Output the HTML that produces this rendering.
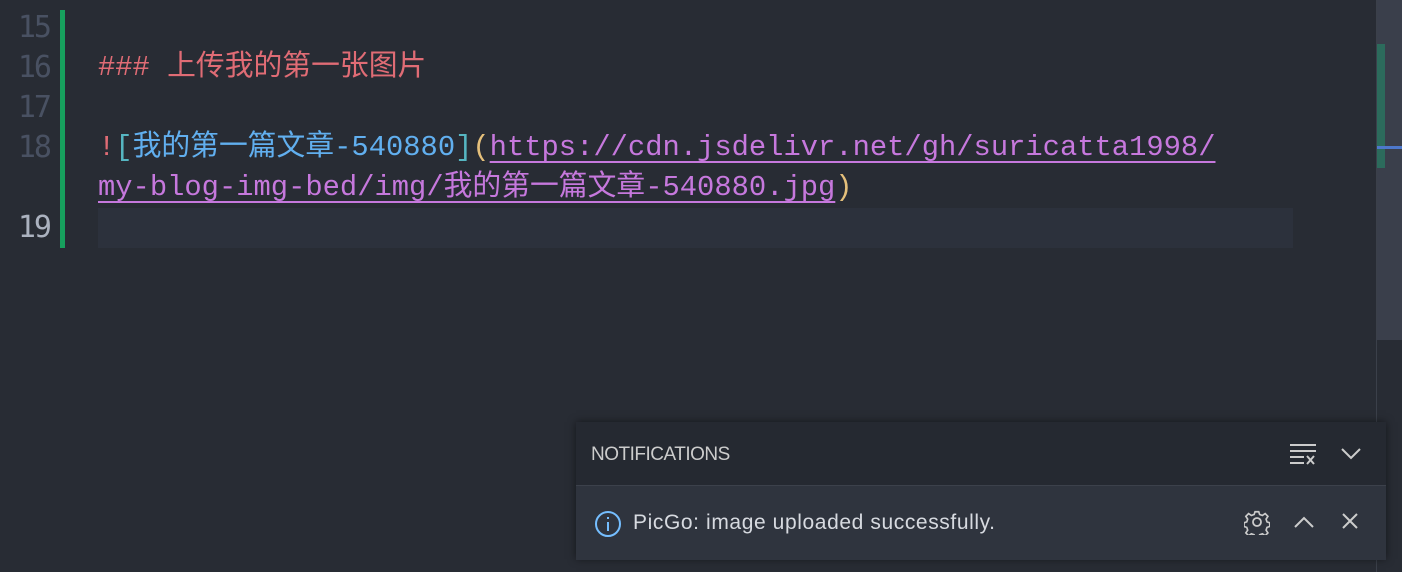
<!DOCTYPE html>
<html><head><meta charset="utf-8"><style>
body{margin:0;width:1402px;height:572px;background:#282c34;overflow:hidden;position:relative;font-family:"Liberation Mono","Noto Sans CJK SC",monospace}
.ln{position:absolute;left:0;width:50px;text-align:right;font-size:30px;color:#495162;height:40px;line-height:40px;font-family:"DejaVu Sans Mono",monospace;letter-spacing:-2px}
.l{position:absolute;left:98px;font-size:28.8px;height:40px;line-height:40px;white-space:pre}
.u{text-decoration:underline;text-decoration-thickness:2px;text-underline-offset:6px}
.n{position:absolute;left:576px;top:422px;width:810px;height:137px;background:#252931;box-shadow:0 0 8px rgba(0,0,0,.5);font-family:"Liberation Sans",sans-serif;color:#ccc}
</style></head><body>
<div style="position:absolute;left:60px;top:10px;width:5px;height:238px;background:#17a05d"></div>
<div style="position:absolute;left:98px;top:208px;width:1195px;height:40px;background:#2c313c"></div>
<div class="ln" style="top:8px">15</div>
<div class="ln" style="top:48px">16</div>
<div class="ln" style="top:88px">17</div>
<div class="ln" style="top:128px">18</div>
<div class="ln" style="top:208px;color:#abb2bf">19</div>
<div class="l" style="top:48px;color:#e06c75">### 上传我的第一张图片</div>
<div class="l" style="top:128px"><span style="color:#e06c75">!</span><span style="color:#56b6c2">[</span><span style="color:#61afef">我的第一篇文章-540880</span><span style="color:#56b6c2">]</span><span style="color:#e5c07b">(</span><span class="u" style="color:#c678dd">https://cdn.jsdelivr.net/gh/suricatta1998/</span></div>
<div class="l" style="top:168px"><span class="u" style="color:#c678dd">my-blog-img-bed/img/我的第一篇文章-540880.jpg</span><span style="color:#e5c07b">)</span></div>
<div style="position:absolute;left:1376px;top:0;width:1px;height:572px;background:#3b404a"></div>
<div style="position:absolute;left:1377px;top:0;width:25px;height:340px;background:#3a3f4b"></div>
<div style="position:absolute;left:1377px;top:44px;width:8px;height:124px;background:#2c6b5c"></div>
<div style="position:absolute;left:1377px;top:146px;width:25px;height:3px;background:#4d78cc"></div>
<div class="n">
<div style="position:absolute;left:15px;top:0;height:63px;line-height:66px;font-size:19px;letter-spacing:-0.5px">NOTIFICATIONS</div>
<svg style="position:absolute;left:712px;top:20px" width="30" height="24" viewBox="0 0 30 24" fill="none" stroke="#ccc" stroke-width="2"><path d="M2 3h26M2 9h26M2 15h14M2 21h14M19 14l7 8M26 14l-7 8"/></svg>
<svg style="position:absolute;left:764px;top:24px" width="22" height="14" viewBox="0 0 22 14" fill="none" stroke="#ccc" stroke-width="2"><path d="M2 3l9 9 9-9"/></svg>
<div style="position:absolute;left:0;top:63px;width:810px;height:74px;background:#2f343e;border-top:1px solid #3c414b">
<svg style="position:absolute;left:18px;top:24px" width="28" height="28" viewBox="0 0 28 28" fill="none" stroke="#75beff" stroke-width="2"><circle cx="14" cy="14" r="12"/><path d="M14 12v9M14 7v2"/></svg>
<div style="position:absolute;left:57px;top:0;line-height:74px;font-size:21px;letter-spacing:0.6px;color:#d7dae0">PicGo: image uploaded successfully.</div>
<svg style="position:absolute;left:668px;top:23px" width="26" height="26" viewBox="0 0 26 26" fill="none" stroke="#ccc" stroke-width="1.8"><circle cx="13" cy="13" r="4"/><path d="M11 2h4l1 3 3 1 3-2 3 3-2 3 1 3 3 1v4l-3 1-1 3 2 3-3 3-3-2-3 1-1 3h-4l-1-3-3-1-3 2-3-3 2-3-1-3-3-1v-4l3-1 1-3-2-3 3-3 3 2 3-1z" transform="scale(0.92) translate(1 1)"/></svg>
<svg style="position:absolute;left:717px;top:29px" width="22" height="14" viewBox="0 0 22 14" fill="none" stroke="#ccc" stroke-width="2"><path d="M2 12l9-9 9 9"/></svg>
<svg style="position:absolute;left:765px;top:26px" width="18" height="18" viewBox="0 0 18 18" fill="none" stroke="#ccc" stroke-width="2"><path d="M2 2l14 14M16 2L2 16"/></svg>
</div></div>
</body></html>
